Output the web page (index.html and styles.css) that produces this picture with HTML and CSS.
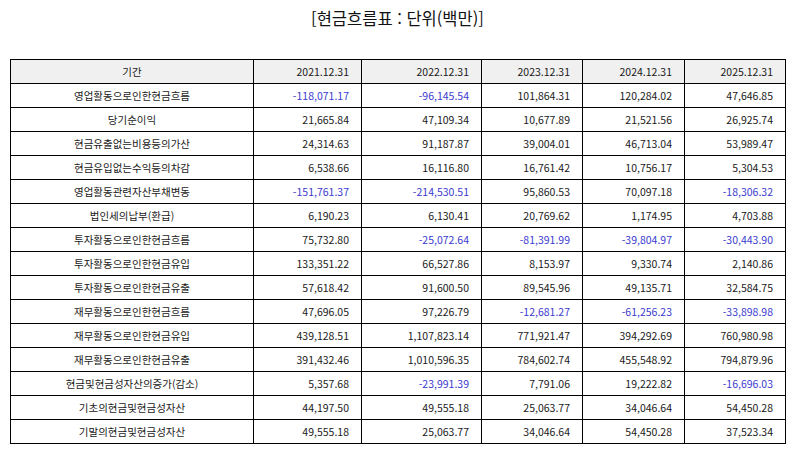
FILE: index.html
```html
<!DOCTYPE html>
<html lang="ko">
<head>
<meta charset="utf-8">
<title>현금흐름표</title>
<link rel="stylesheet" href="styles.css">
</head>
<body>
<div class="page">
  <h1 class="title">[현금흐름표 : 단위(백만)]</h1>
  <table class="cf">
    <colgroup>
      <col class="c-label"><col class="c1"><col class="c2"><col class="c3"><col class="c4"><col class="c5">
    </colgroup>
    <thead>
      <tr><th class="label">기간</th><th>2021.12.31</th><th>2022.12.31</th><th>2023.12.31</th><th>2024.12.31</th><th>2025.12.31</th></tr>
    </thead>
    <tbody>
      <tr><td class="label">영업활동으로인한현금흐름</td><td class="neg">-118,071.17</td><td class="neg">-96,145.54</td><td>101,864.31</td><td>120,284.02</td><td>47,646.85</td></tr>
      <tr><td class="label">당기순이익</td><td>21,665.84</td><td>47,109.34</td><td>10,677.89</td><td>21,521.56</td><td>26,925.74</td></tr>
      <tr><td class="label">현금유출없는비용등의가산</td><td>24,314.63</td><td>91,187.87</td><td>39,004.01</td><td>46,713.04</td><td>53,989.47</td></tr>
      <tr><td class="label">현금유입없는수익등의차감</td><td>6,538.66</td><td>16,116.80</td><td>16,761.42</td><td>10,756.17</td><td>5,304.53</td></tr>
      <tr><td class="label">영업활동관련자산부채변동</td><td class="neg">-151,761.37</td><td class="neg">-214,530.51</td><td>95,860.53</td><td>70,097.18</td><td class="neg">-18,306.32</td></tr>
      <tr><td class="label">법인세의납부(환급)</td><td>6,190.23</td><td>6,130.41</td><td>20,769.62</td><td>1,174.95</td><td>4,703.88</td></tr>
      <tr><td class="label">투자활동으로인한현금흐름</td><td>75,732.80</td><td class="neg">-25,072.64</td><td class="neg">-81,391.99</td><td class="neg">-39,804.97</td><td class="neg">-30,443.90</td></tr>
      <tr><td class="label">투자활동으로인한현금유입</td><td>133,351.22</td><td>66,527.86</td><td>8,153.97</td><td>9,330.74</td><td>2,140.86</td></tr>
      <tr><td class="label">투자활동으로인한현금유출</td><td>57,618.42</td><td>91,600.50</td><td>89,545.96</td><td>49,135.71</td><td>32,584.75</td></tr>
      <tr><td class="label">재무활동으로인한현금흐름</td><td>47,696.05</td><td>97,226.79</td><td class="neg">-12,681.27</td><td class="neg">-61,256.23</td><td class="neg">-33,898.98</td></tr>
      <tr><td class="label">재무활동으로인한현금유입</td><td>439,128.51</td><td>1,107,823.14</td><td>771,921.47</td><td>394,292.69</td><td>760,980.98</td></tr>
      <tr><td class="label">재무활동으로인한현금유출</td><td>391,432.46</td><td>1,010,596.35</td><td>784,602.74</td><td>455,548.92</td><td>794,879.96</td></tr>
      <tr><td class="label">현금및현금성자산의증가(감소)</td><td>5,357.68</td><td class="neg">-23,991.39</td><td>7,791.06</td><td>19,222.82</td><td class="neg">-16,696.03</td></tr>
      <tr><td class="label">기초의현금및현금성자산</td><td>44,197.50</td><td>49,555.18</td><td>25,063.77</td><td>34,046.64</td><td>54,450.28</td></tr>
      <tr><td class="label">기말의현금및현금성자산</td><td>49,555.18</td><td>25,063.77</td><td>34,046.64</td><td>54,450.28</td><td>37,523.34</td></tr>
    </tbody>
  </table>
</div>
</body>
</html>
```

FILE: styles.css
```css
html, body {
  margin: 0;
  padding: 0;
  background: #ffffff;
}

body {
  font-family: "Noto Sans CJK KR", "Noto Sans", sans-serif;
  color: #222222;
}

.page {
  width: 794px;
  padding: 7px 0 0 10px;
  box-sizing: border-box;
}

.title {
  margin: 0;
  width: 775px;
  height: 22px;
  line-height: 22px;
  font-size: 16.5px;
  font-weight: 400;
  text-align: center;
  color: #111111;
}

.cf {
  margin-top: 30px;
  width: 775px;
  table-layout: fixed;
  border-collapse: collapse;
  font-size: 10.5px;
}

.c-label { width: 243px; }
.c1 { width: 108px; }
.c2 { width: 120px; }
.c3 { width: 101px; }
.c4 { width: 102px; }
.c5 { width: 101px; }

.cf th,
.cf td {
  border: 1px solid #000000;
  height: 23px;
  padding: 0 12px 0 4px;
  text-align: right;
  font-weight: 400;
  white-space: nowrap;
  line-height: 14px;
  color: #1a1a1a;
}

.cf th {
  background: #f0f0f0;
}

.cf .label {
  text-align: center;
  padding: 0 4px;
}

.cf td.neg {
  color: #3b3bd0;
}
```
